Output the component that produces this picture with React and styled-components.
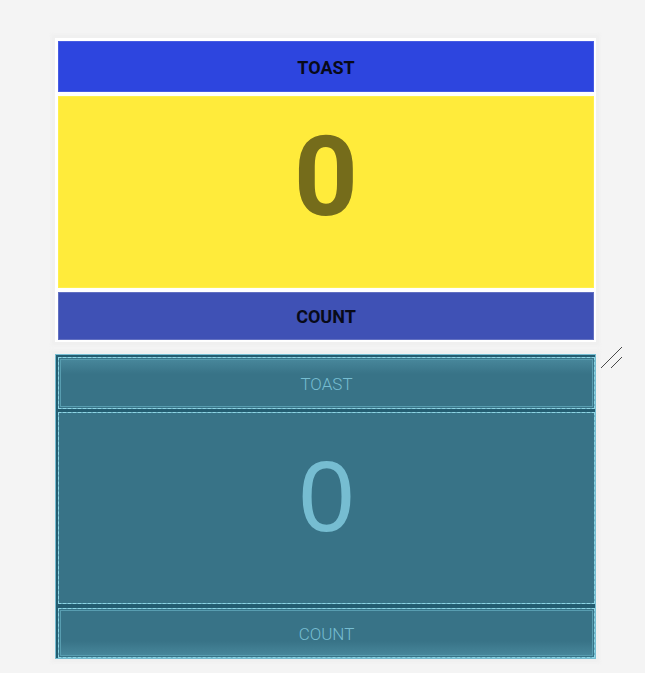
import React from "react";
import styled, { createGlobalStyle } from "styled-components";

const GlobalStyle = createGlobalStyle`
  *, *::before { box-sizing: border-box; }
  body {
    margin: 0;
    background: #f4f4f4;
    font-family: Roboto, sans-serif;
  }
`;

const Page = styled.main`
  display: flex;
  flex-direction: column;
  gap: 12px;
  padding: 38px 49px 14px 55px;
`;

const Card = styled.section`
  display: flex;
  flex-direction: column;
  gap: 4px;
  padding: 3px 2px 2px 3px;
  background: #fff;
  box-shadow: 0 0 3px 4px #f0f0f0;
`;

const BarButton = styled.button`
  height: ${(p) => p.$height}px;
  padding: 2px 0 0;
  border: 1px solid ${(p) => p.$edge};
  background: ${(p) => p.$color};
  color: #080a18;
  font: 700 18px/20px Roboto, sans-serif;
  text-align: center;
`;

const Display = styled.output`
  display: flex;
  justify-content: center;
  height: 192px;
  padding-top: 24px;
  border: 1px solid #fff04d;
  background: #ffeb3b;
  color: #756c1b;
  font-size: 112px;
  font-weight: 700;
  line-height: 112px;
`;

const BlueprintCard = styled.section`
  display: flex;
  flex-direction: column;
  gap: 3px;
  position: relative;
  padding: 2px 0 0 2px;
  border: 1px solid #76bdd1;
  background: #235c70;
  box-shadow: 0 0 3px 4px #f0f0f0;
`;

const BlueprintButton = styled.button`
  height: ${(p) => p.$height}px;
  padding: 1px;
  border: 1px dashed #8ed5e4;
  background: linear-gradient(#387387, #387387) padding-box, #6cb2c5 border-box;
  color: #76bdd1;
  font: 300 17px/20px Roboto, sans-serif;
`;

const BlueprintFace = styled.span`
  display: flex;
  align-items: center;
  justify-content: center;
  height: 100%;
  padding-top: 1px;
  border: 1px solid #589db0;
  background: linear-gradient(
    ${(p) => (p.$lit === "top" ? "to bottom" : "to top")},
    #47869a,
    #387387 14px
  );
`;

const BlueprintDisplay = styled.output`
  display: flex;
  justify-content: center;
  height: 192px;
  margin-bottom: 1px;
  padding-top: 33px;
  border: 1px dashed #8ed5e4;
  background: linear-gradient(#387387, #387387) padding-box, #6cb2c5 border-box;
  color: #76bdd1;
  font-family: "Liberation Sans", Arial, sans-serif;
  font-size: 100px;
  font-weight: 400;
  line-height: 100px;
`;

const ResizeGrip = styled.svg`
  position: absolute;
  top: -9px;
  right: -28px;
`;

export default function App() {
  return (
    <>
      <GlobalStyle />
      <Page>
        <Card>
          <BarButton type="button" $height={51} $color="#2d45df" $edge="#475ce3">TOAST</BarButton>
          <Display>0</Display>
          <BarButton type="button" $height={48} $color="#3f51b5" $edge="#6270c1">COUNT</BarButton>
        </Card>
        <BlueprintCard>
          <BlueprintButton type="button" $height={52}>
            <BlueprintFace $lit="top">TOAST</BlueprintFace>
          </BlueprintButton>
          <BlueprintDisplay>0</BlueprintDisplay>
          <BlueprintButton type="button" $height={50}>
            <BlueprintFace $lit="bottom">COUNT</BlueprintFace>
          </BlueprintButton>
          <ResizeGrip width="24" height="24" viewBox="0 0 24 24" aria-hidden="true">
            <path d="M2 22L23 1M12 22L23 11" stroke="#4a4a4a" strokeWidth="1" fill="none" />
          </ResizeGrip>
        </BlueprintCard>
      </Page>
    </>
  );
}
